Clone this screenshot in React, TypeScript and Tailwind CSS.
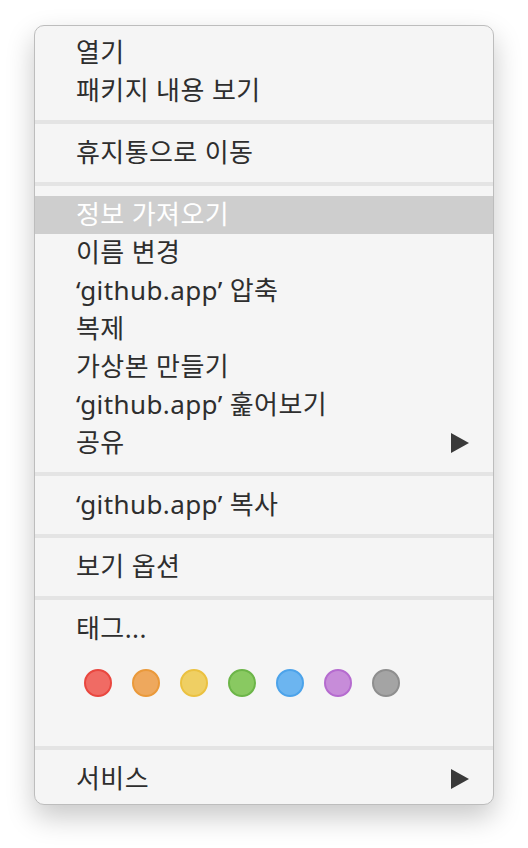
import React from 'react';

const font = { fontFamily: '"Noto Sans", "Noto Sans CJK KR", sans-serif' };

function Item({ label, active, submenu }: { label: string; active?: boolean; submenu?: boolean }) {
  return (
    <div
      className={`flex h-[38px] items-center justify-between pl-[41px] pr-[24px] text-[26px] leading-none tracking-[0.4px] ${
        active ? 'bg-[#cecece] text-white' : 'text-[#2e2e2e]'
      }`}
    >
      <span className="-mt-[3px]">{label}</span>
      {submenu && (
        <svg width="18" height="20" viewBox="0 0 18 20" className="text-[#3a3a3a]">
          <path d="M0 0 L18 10 L0 20 Z" fill="currentColor" />
        </svg>
      )}
    </div>
  );
}

function Sep() {
  return <div className="my-[10px] h-[4px] bg-[#e4e4e4]" />;
}

const tags = [
  ['bg-[#f06b64]', 'border-[#e9473f]'],
  ['bg-[#eea85d]', 'border-[#ea993a]'],
  ['bg-[#efcf63]', 'border-[#ebc140]'],
  ['bg-[#89c961]', 'border-[#6cb548]'],
  ['bg-[#6cb5f0]', 'border-[#4ca3ea]'],
  ['bg-[#c78cd9]', 'border-[#b56bcf]'],
  ['bg-[#a4a4a4]', 'border-[#8e8e8e]'],
];

export default function App() {
  return (
    <div className="min-h-screen bg-white pl-[34px] pt-[25px]" style={font}>
      <div className="w-[460px] overflow-hidden rounded-[10px] border border-[#bdbdbd] bg-[#f5f5f5] pb-[6px] pt-[8px] shadow-[0_12px_28px_rgba(0,0,0,0.22)]">
        <Item label="열기" />
        <Item label="패키지 내용 보기" />
        <Sep />
        <Item label="휴지통으로 이동" />
        <Sep />
        <Item label="정보 가져오기" active />
        <Item label="이름 변경" />
        <Item label="‘github.app’ 압축" />
        <Item label="복제" />
        <Item label="가상본 만들기" />
        <Item label="‘github.app’ 훑어보기" />
        <Item label="공유" submenu />
        <Sep />
        <Item label="‘github.app’ 복사" />
        <Sep />
        <Item label="보기 옵션" />
        <Sep />
        <Item label="태그..." />
        <div className="flex h-[88px] gap-[20px] pl-[49px] pt-[21px]">
          {tags.map(([bg, border], i) => (
            <div key={i} className={`h-[28px] w-[28px] rounded-full border-2 ${bg} ${border}`} />
          ))}
        </div>
        <Sep />
        <Item label="서비스" submenu />
      </div>
    </div>
  );
}
